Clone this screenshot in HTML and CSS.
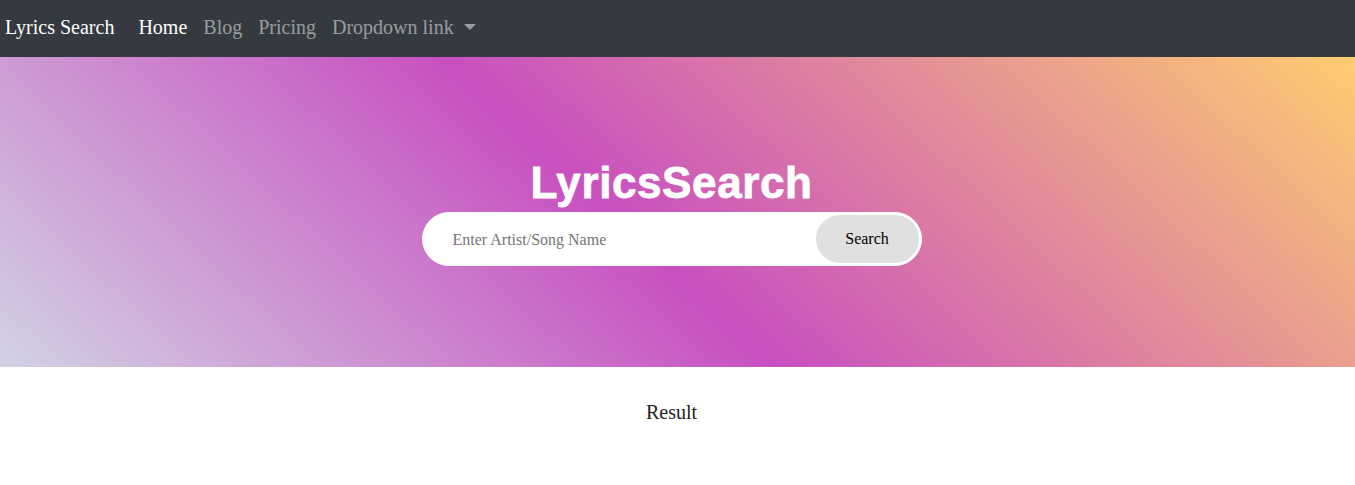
FILE: index.html
```html
<!DOCTYPE html>
<html>
<head>
<meta charset="utf-8">
<link rel="stylesheet" href="styles.css">
</head>
<body>
<nav class="navbar">
  <a class="brand">Lyrics Search</a>
  <ul class="nav">
    <li><a class="nav-link active">Home</a></li>
    <li><a class="nav-link">Blog</a></li>
    <li><a class="nav-link">Pricing</a></li>
    <li><a class="nav-link dropdown">Dropdown link</a></li>
  </ul>
</nav>
<header class="hero">
  <h1 class="title">LyricsSearch</h1>
  <form class="search">
    <input class="search-input" type="text" placeholder="Enter Artist/Song Name">
    <button class="search-btn" type="button">Search</button>
  </form>
</header>
<main class="result">Result</main>
</body>
</html>
```
FILE: styles.css
```css
* { box-sizing: border-box; }
body {
  margin: 0;
  font-family: "Liberation Serif", "Times New Roman", serif;
}
.navbar {
  height: 57px;
  background: #343a40;
  display: flex;
  align-items: center;
  padding: 0 5px 2px;
}
.brand {
  color: #fff;
  font-size: 20px;
  margin-right: 16px;
}
.nav {
  display: flex;
  list-style: none;
  margin: 0;
  padding: 0;
}
.nav-link {
  display: block;
  font-size: 20px;
  color: rgba(255,255,255,.5);
  padding: 0 8px;
}
.nav-link.active { color: #fff; }
.dropdown::after {
  content: "";
  display: inline-block;
  margin-left: 10px;
  vertical-align: 4px;
  border-top: 6px solid rgba(255,255,255,.5);
  border-left: 6px solid transparent;
  border-right: 6px solid transparent;
}
.hero {
  height: 310px;
  background: linear-gradient(43deg, #d2d2e4 0%, #c850c0 46%, #ffcc70 100%);
  display: flex;
  flex-direction: column;
  align-items: center;
  justify-content: center;
  padding: 2px 12px 0 0;
}
.title {
  margin: 0 0 7px;
  font-family: "Liberation Sans", Arial, sans-serif;
  font-weight: bold;
  font-size: 44px;
  line-height: 44px;
  color: #fff;
  -webkit-text-stroke: 0.8px #fff;
  letter-spacing: 0.6px;
}
.search {
  margin-top: 0;
  width: 500px;
  height: 54px;
  background: #fff;
  border-radius: 27px;
  display: flex;
  align-items: center;
  padding: 2px;
  border: 1px solid #fff;
}
.search-input {
  flex: 1;
  border: none;
  outline: none;
  background: transparent;
  font-family: "Liberation Serif", "Times New Roman", serif;
  font-size: 16px;
  padding: 2px 0 0 28px;
  color: #333;
}
.search-input::placeholder { color: #757575; }
.search-btn {
  width: 103px;
  height: 100%;
  border: none;
  border-radius: 25px;
  background: #e0e0e0;
  font-family: "Liberation Serif", "Times New Roman", serif;
  font-size: 16px;
  color: #000;
  padding-top: 2px;
}
.result {
  text-align: center;
  font-size: 20px;
  padding: 34px 12px 0 0;
  color: #222;
}
```
